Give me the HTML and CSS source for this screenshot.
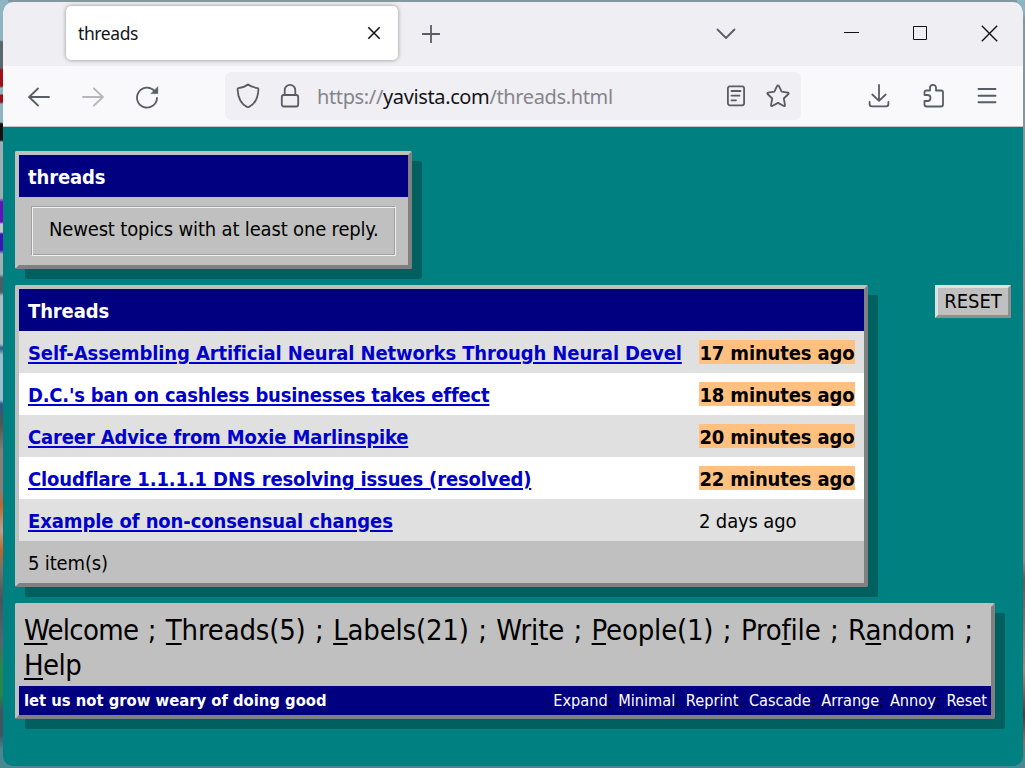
FILE: index.html
```html
<!DOCTYPE html>
<html lang="en">
<head>
<meta charset="utf-8">
<title>threads</title>
<link rel="stylesheet" href="styles.css">
</head>
<body>
<div class="window">
  <div class="tabstrip">
    <div class="tab"><span class="tab-title">threads</span>
      <svg class="tab-close" width="14" height="14" viewBox="0 0 14 14"><path d="M1.3 1.3l11.4 11.4M12.7 1.3L1.3 12.7"/></svg>
    </div>
    <svg class="ico newtab" width="18" height="18" viewBox="0 0 18 18"><path d="M9 .5v17M.5 9h17"/></svg>
    <svg class="ico alltabs" width="20" height="12" viewBox="0 0 20 12"><path d="M1.5 1.5L10 10l8.500-8.500"/></svg>
    <svg class="ctl min" width="16" height="16" viewBox="0 0 16 16"><path d="M0 7.500h15"/></svg>
    <svg class="ctl max" width="16" height="16" viewBox="0 0 16 16"><path d="M1.500 1.500h13v13h-13z"/></svg>
    <svg class="ctl close" width="17" height="17" viewBox="0 0 17 17"><path d="M.8.800l15.400 15.400M16.200.800L.8 16.200"/></svg>
  </div>
  <div class="toolbar">
    <svg class="ico back" width="24" height="24" viewBox="0 0 24 24"><path d="M22 12H2M11 3.500l-8.800 8.500 8.800 8.500"/></svg>
    <svg class="ico forward" width="24" height="24" viewBox="0 0 24 24"><path d="M2 12h20M13 3.500l8.800 8.500-8.800 8.500"/></svg>
    <svg class="ico reload" width="26" height="26" viewBox="0 0 26 26"><path d="M20.500 7A10 10 0 1 0 23 14"/><path class="solid" d="M23.800 3v6.600h-6.600z"/></svg>
    <div class="urlbar">
      <svg class="ico shield" width="24" height="26" viewBox="0 0 24 26"><path d="M12 1.500C9.500 3.500 5.500 4.700 2.300 5.200 1.500 5.300 1.600 6 1.600 6.600 2 14 5 21 11 23.900q1 .6 2 0C19 21 22 14 22.400 6.600c0-.6.100-1.300-.7-1.400C18.500 4.700 14.500 3.500 12 1.500z"/></svg>
      <svg class="ico lock" width="20" height="26" viewBox="0 0 20 26"><rect x="1.800" y="12" width="16.400" height="11.500" rx="2"/><path d="M4.700 12V7.200a5.300 5.300 0 0 1 10.600 0V12"/></svg>
      <span class="url">https://<b>yavista.com</b>/threads.html</span>
      <svg class="ico reader" width="20" height="24" viewBox="0 0 20 24"><rect x="1.900" y="2.300" width="16.200" height="19" rx="2"/><path d="M5.500 7h9M5.500 11.700h8M5.500 16.300h4.500"/></svg>
      <svg class="ico star" width="26" height="26" viewBox="0 0 26 26"><path d="M13 2.500q.7 0 1 .7l2.600 5.500 6.400 1q1.200.3.400 1.300l-4.600 4.500 1.200 6.600q.1 1.400-1.200.9L13 19.900 7.200 23q-1.300.5-1.200-.9l1.200-6.600L2.600 11q-.8-1 .4-1.300l6.400-1L12 3.200q.3-.7 1-.7z"/></svg>
    </div>
    <svg class="ico download" width="24" height="26" viewBox="0 0 24 26"><path d="M12 2v15.500M5.300 11.500l6.700 6.300 6.700-6.300M2.600 19v2q0 2.300 2.300 2.300h14.200q2.300 0 2.300-2.300v-2"/></svg>
    <svg class="ico puzzle" width="24" height="26" viewBox="0 0 24 26"><path d="M2.500 9.500q0-2 2-2H8V4.800a3 3 0 0 1 6 0v2.700h5q2 0 2 2v12q0 2-2 2H4.500q-2 0-2-2V18h3a3 3 0 0 0 0-6h-3z"/></svg>
    <svg class="ico menu" width="20" height="18" viewBox="0 0 20 18"><path d="M1.500 2h17M1.500 8.700h17M1.500 15.300h17"/></svg>
  </div>
  <main class="page">
    <section class="dialog intro">
      <h1 class="titlebar"><span class="intro-title">threads</span></h1>
      <div class="groove"><span class="intro-text">Newest topics with at least one reply.</span></div>
    </section>
    <div class="row">
      <section class="dialog list">
        <h2 class="titlebar"><span class="list-title">Threads</span></h2>
        <div class="item"><a class="t1">Self-Assembling Artificial Neural Networks Through Neural Devel</a><span class="time"><mark>17 minutes ago</mark></span></div>
        <div class="item"><a class="t2">D.C.'s ban on cashless businesses takes effect</a><span class="time"><mark>18 minutes ago</mark></span></div>
        <div class="item"><a class="t3">Career Advice from Moxie Marlinspike</a><span class="time"><mark>20 minutes ago</mark></span></div>
        <div class="item"><a class="t4">Cloudflare 1.1.1.1 DNS resolving issues (resolved)</a><span class="time"><mark>22 minutes ago</mark></span></div>
        <div class="item"><a class="t5">Example of non-consensual changes</a><span class="time">2 days ago</span></div>
        <div class="count">5 item(s)</div>
      </section>
      <button class="reset">RESET</button>
    </div>
    <section class="dialog menu-box">
      <nav class="links"><span class="welcome"><u>W</u>elcome</span> ; <u>T</u>hreads(5) ; <u>L</u>abels(21) ; Wr<u>i</u>te ; <u>P</u>eople(1) ; Pro<u>f</u>ile ; R<u>a</u>ndom ;<br><span class="help"><u>H</u>elp</span></nav>
      <div class="status"><b class="motto">let us not grow weary of doing good</b><span class="controls"><i>Expand</i>; <i>Minimal</i>; <i>Reprint</i>; <i>Cascade</i>; <i>Arrange</i>; <i>Annoy</i>; <i>Reset</i></span></div>
    </section>
  </main>
</div>
</body>
</html>
```
FILE: styles.css
```css
* { box-sizing: border-box; }
body {
  margin: 0; width: 1025px; height: 768px; overflow: hidden; padding: 2px 2px 2px 3px;
  font-family: "DejaVu Sans Condensed", "DejaVu Sans", sans-serif; font-size: 20px; color: #000;
  font-variant-ligatures: none;
  background:
    linear-gradient(#84979c, #84979c) 8px 0 / 1009px 2px no-repeat,
    linear-gradient(#4a8790, #4a8790) 0 766px / 1025px 2px no-repeat,
    linear-gradient(#8fb5c2 0 40px, #59666b 42px 68px, #a01018 70px 86px, #8fb5c2 88px 94px, #a01018 95px 102px, #8fb5c2 104px 122px, #111 124px 140px, #9dadb3 142px 198px, #6410bd 202px 222px, #c4c4cc 224px 232px, #3b14b8 234px 250px, #9eb0b5 254px 274px, #4f5c64 278px 292px, #a9bac0 296px 344px, #29598a 348px, #9bbccc 355px 400px, #29598a 404px, #565550 425px, #857d76 450px 490px, #c2652a 505px, #bca18c 530px, #c2652a 550px, #75706c 570px, #47545d 600px, #57656b 640px, #258648 670px 695px, #3e5660 710px 735px, #4a8790 750px) 0 0 / 3px 768px no-repeat,
    linear-gradient(#8fb5c2 0 10px, #84979c 20px 240px, #8b8c90 350px, #8b8c90 560px, #5d5a60 580px, #8a827f 650px, #a4877c 670px, #453d40 715px, #79716d 740px, #4a8790 755px) 1023px 0 / 2px 768px no-repeat,
    linear-gradient(#8fb5c2 50%, #4a8790 50%);
}
.window { width: 1020px; height: 764px; border-radius: 10px; overflow: hidden; background: #008080; }
.tabstrip { height: 64px; background: #efeef3; display: flex; align-items: center; padding-left: 63px; }
.tab {
  width: 332px; height: 54px; margin-bottom: 2px; background: #fff; border-radius: 5px;
  box-shadow: 0 0 4px rgba(0,0,0,.4);
  display: flex; align-items: center; justify-content: space-between; padding: 0 17px 0 12px;
}
.tab-title { font-family: "Noto Sans", sans-serif; font-size: 17.5px; letter-spacing: -.4px; color: #15141a; }
.tab-close { fill: none; stroke: #15141a; stroke-width: 1.6; }
.ico { fill: none; stroke: #5b5b66; stroke-width: 1.8; stroke-linecap: round; stroke-linejoin: round; flex: none; }
.newtab { margin-left: 23.5px; }
.alltabs { margin-left: 276px; }
.ctl { fill: none; stroke: #111; stroke-width: 1; flex: none; margin-bottom: 2px; }
.min { margin-left: 108px; }
.max { margin-left: 52px; }
.close { margin-left: 53px; stroke-width: 1.4; }
.toolbar { height: 61px; background: #f9f9fb; border-bottom: 1px solid #c5c5c8; display: flex; align-items: center; padding-left: 24px; }
.back, .forward { margin-top: 1px; }
.forward { margin-left: 30px; opacity: .42; }
.reload { margin-left: 29px; margin-top: 1px; }
.solid { fill: #5b5b66; stroke-width: .6; }
.urlbar { width: 576px; height: 48px; margin-left: 65px; background: #f0eff4; border-radius: 6px; display: flex; align-items: center; padding-left: 11px; }
.lock { margin-left: 20px; }
.url { width: 298px; margin: 1px 0 0 17px; font-family: "Noto Sans", sans-serif; font-size: 20px; letter-spacing: -.37px; color: #85858b; white-space: nowrap; }
.url b { font-weight: 400; color: #15141a; }
.reader { margin-left: 111px; }
.star { margin-left: 19px; }
.download { margin-left: 66px; }
.puzzle { margin-left: 31px; }
.menu { margin-left: 31px; }
.menu path { stroke-width: 1.9; }

.page { padding: 24px 12px 0; }
.dialog {
  border: 4px solid; border-color: #c0c0c0 #808080 #808080 #c0c0c0; border-radius: 2px;
  background: #c0c0c0; box-shadow: 10px 10px 0 #006060;
}
.titlebar { margin: 0; height: 42px; background: #000080; color: #fff; font-size: 20px; line-height: 45px; letter-spacing: -.12px; padding-left: 9px; }
.intro { width: 397px; height: 118px; }
.groove {
  margin: 9px 12px 0 12px; height: 50px; border: 1px solid; border-color: #a0a0a0 #f0f0f0 #f0f0f0 #a0a0a0;
  box-shadow: inset 1px 1px 0 #f0f0f0, inset -1px -1px 0 #a0a0a0;
  padding-left: 17px; line-height: 44px; letter-spacing: -.17px; white-space: nowrap;
}
.row { display: flex; justify-content: space-between; align-items: flex-start; margin-top: 16px; }
.list { width: 853px; height: 302px; }
.item { height: 42px; display: flex; line-height: 45px; padding-left: 9px; background: #e0e0e0; white-space: nowrap; }
.item:nth-of-type(even) { background: #fff; }
.item a { width: 671px; font-weight: 700; color: #0000cc; text-decoration: underline; text-decoration-thickness: 2px; text-underline-offset: 2px; }
.item .t1 { letter-spacing: -.11px; }
.item .t2 { letter-spacing: -.21px; }
.item .t3 { letter-spacing: -.15px; }
.item .t4 { letter-spacing: -.14px; }
.item .t5 { letter-spacing: -.1px; }
.time { letter-spacing: -.15px; }
mark { display: inline-block; width: 156px; height: 24px; line-height: 26px; text-indent: .5px; background: #ffc080; color: #000; font-weight: 700; }
.count { height: 42px; line-height: 45px; padding-left: 9px; letter-spacing: -.15px; }
.reset {
  width: 76px; height: 33px; padding: 0; border: 3px solid; border-color: #e0e0e0 #909090 #909090 #e0e0e0;
  background: #c0c0c0; color: #000; font: inherit; line-height: 27px;
}
.menu-box { width: 980px; height: 116px; margin-top: 16px; }
.links { height: 79px; padding: 6px 0 0 5px; font-size: 29px; line-height: 35px; letter-spacing: -.2px; word-spacing: 1.4px; white-space: nowrap; }
.links u { text-decoration-thickness: 2px; text-underline-offset: 3px; text-decoration-skip-ink: none; }
.welcome { letter-spacing: -.7px; }
.help { letter-spacing: -.6px; }
.status { height: 29px; background: #000080; display: flex; justify-content: space-between; align-items: center; padding: 0 4px 0 5px; font-size: 16.2px; line-height: 30px; white-space: nowrap; }
.motto { color: #fff; font-size: 16.45px; }
.controls { word-spacing: 1px; }
.controls i { color: #fff; font-style: normal; }
```
